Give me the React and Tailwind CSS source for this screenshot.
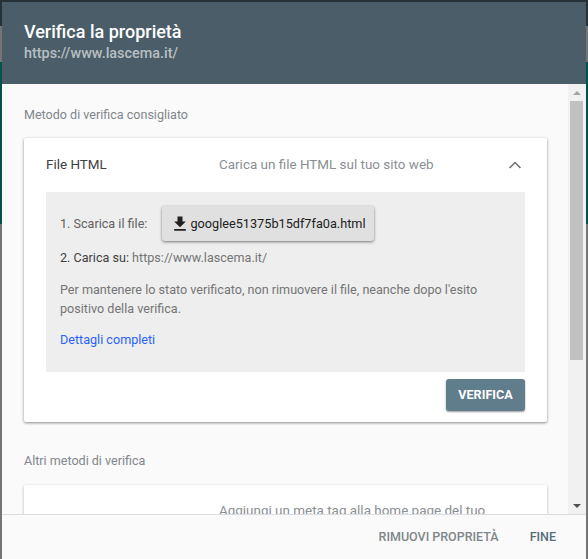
const font = { fontFamily: 'Roboto, sans-serif' }

const Backdrop = () => (
  <div className="absolute inset-0 flex flex-col bg-[#757575]">
    <div className="h-[26px] bg-[#263238]" />
    <div className="h-[36px]" />
    <div className="h-[162px] bg-[#00524d]" />
  </div>
)

const Scrollbar = () => (
  <div className="w-[18px] shrink-0 bg-[#f1f1f1] flex flex-col items-center">
    <div className="h-[17px] flex items-center justify-center">
      <div className="w-0 h-0 border-x-[4px] border-x-transparent border-b-[4px] border-b-[#a3a3a3]" />
    </div>
    <div className="w-[13px] h-[259px] mr-[1px] bg-[#c1c1c1]" />
    <div className="flex-1" />
    <div className="h-[17px] flex items-center justify-center">
      <div className="w-0 h-0 border-x-[4px] border-x-transparent border-t-[4px] border-t-[#505050]" />
    </div>
  </div>
)

const App = () => {
  return (
    <div className="relative w-[588px] h-[559px] overflow-hidden" style={font}>
      <Backdrop />
      <div className="absolute left-[2px] top-[2px] w-[584px] h-[557px] flex flex-col bg-[#fafafa]">
        <div className="h-[82px] shrink-0 bg-[#4a5d68] pl-[22px] pt-[19px]">
          <div className="text-[18px] leading-[22px] font-medium text-white">Verifica la proprietà</div>
          <div className="text-[14.4px] leading-[21px] font-medium text-[#b7bfc3]">https://www.lascema.it/</div>
        </div>

        <div className="flex flex-1 min-h-0">
          <div className="flex-1 min-w-0 overflow-hidden pl-[22px] pr-[21px]">
            <div className="mt-[22px] text-[12.55px] leading-[18px] text-[#80868b]">Metodo di verifica consigliato</div>

            <div className="mt-[14px] bg-white rounded-[2px] shadow-[0_1px_3px_rgba(0,0,0,0.45)] px-[22px] pb-[11px]">
              <div className="h-[54px] pt-[1px] flex items-center text-[13.45px]">
                <div className="w-[173px] text-[#3c4043]">File HTML</div>
                <div className="flex-1 text-[#8a8f93]">Carica un file HTML sul tuo sito web</div>
                <svg width="24" height="24" viewBox="0 0 24 24" className="mr-[-2px] mt-[-2px]" fill="#6b6b6b">
                  <path d="M12 8.4l-6 6 1.1 1.1 4.9-4.9 4.9 4.9 1.1-1.1z" />
                </svg>
              </div>

              <div className="bg-[#eeeeee] h-[180px] px-[14px] pt-[14px] text-[12.6px] leading-[20px] text-[#757575]">
                <div className="flex items-center">
                  <div className="w-[102px] text-[#616161]">1. Scarica il file:</div>
                  <button className="h-[35px] w-[212px] flex items-center justify-center rounded-[3px] bg-[#e0e0e0] shadow-[0_1px_3px_rgba(0,0,0,0.5)] text-[12.7px] text-[#212121]">
                    <svg width="20" height="20" viewBox="0 0 24 24" fill="#212121">
                      <path d="M19 9h-4V3H9v6H5l7 7 7-7zM5 18v2h14v-2H5z" />
                    </svg>
                    googlee51375b15df7fa0a.html
                  </button>
                </div>
                <div className="mt-[7px]">
                  <span className="text-[#424242]">2. Carica su: </span>
                  <span>https://www.lascema.it/</span>
                </div>
                <div className="mt-[12px] leading-[19px]">
                  Per mantenere lo stato verificato, non rimuovere il file, neanche dopo l'esito positivo della verifica.
                </div>
                <div className="mt-[12px] text-[#2962ff]">Dettagli completi</div>
              </div>

              <div className="mt-[7px] flex justify-end">
                <button className="w-[79px] h-[32px] rounded-[3px] bg-[#607d8b] shadow-[0_1px_2px_rgba(0,0,0,0.4)] text-[12.6px] font-bold text-white">VERIFICA</button>
              </div>
            </div>

            <div className="mt-[30px] text-[12.55px] leading-[18px] text-[#80868b]">Altri metodi di verifica</div>

            <div className="mt-[15px] h-[60px] bg-white rounded-[2px] shadow-[0_1px_3px_rgba(0,0,0,0.3)] pl-[195px] pt-[16px] text-[13.45px] leading-[20px] text-[#8a8f93]">
              Aggiungi un meta tag alla home page del tuo
            </div>
          </div>
          <Scrollbar />
        </div>

        <div className="relative h-[45px] shrink-0 border-t border-[#dadce0] bg-[#fafafa] flex items-center justify-end text-[12.5px] font-medium">
          <div className="text-[#80868b]">RIMUOVI PROPRIETÀ</div>
          <div className="ml-[31px] mr-[30px] text-[#546e7a]">FINE</div>
        </div>
      </div>
    </div>
  )
}

export default App
